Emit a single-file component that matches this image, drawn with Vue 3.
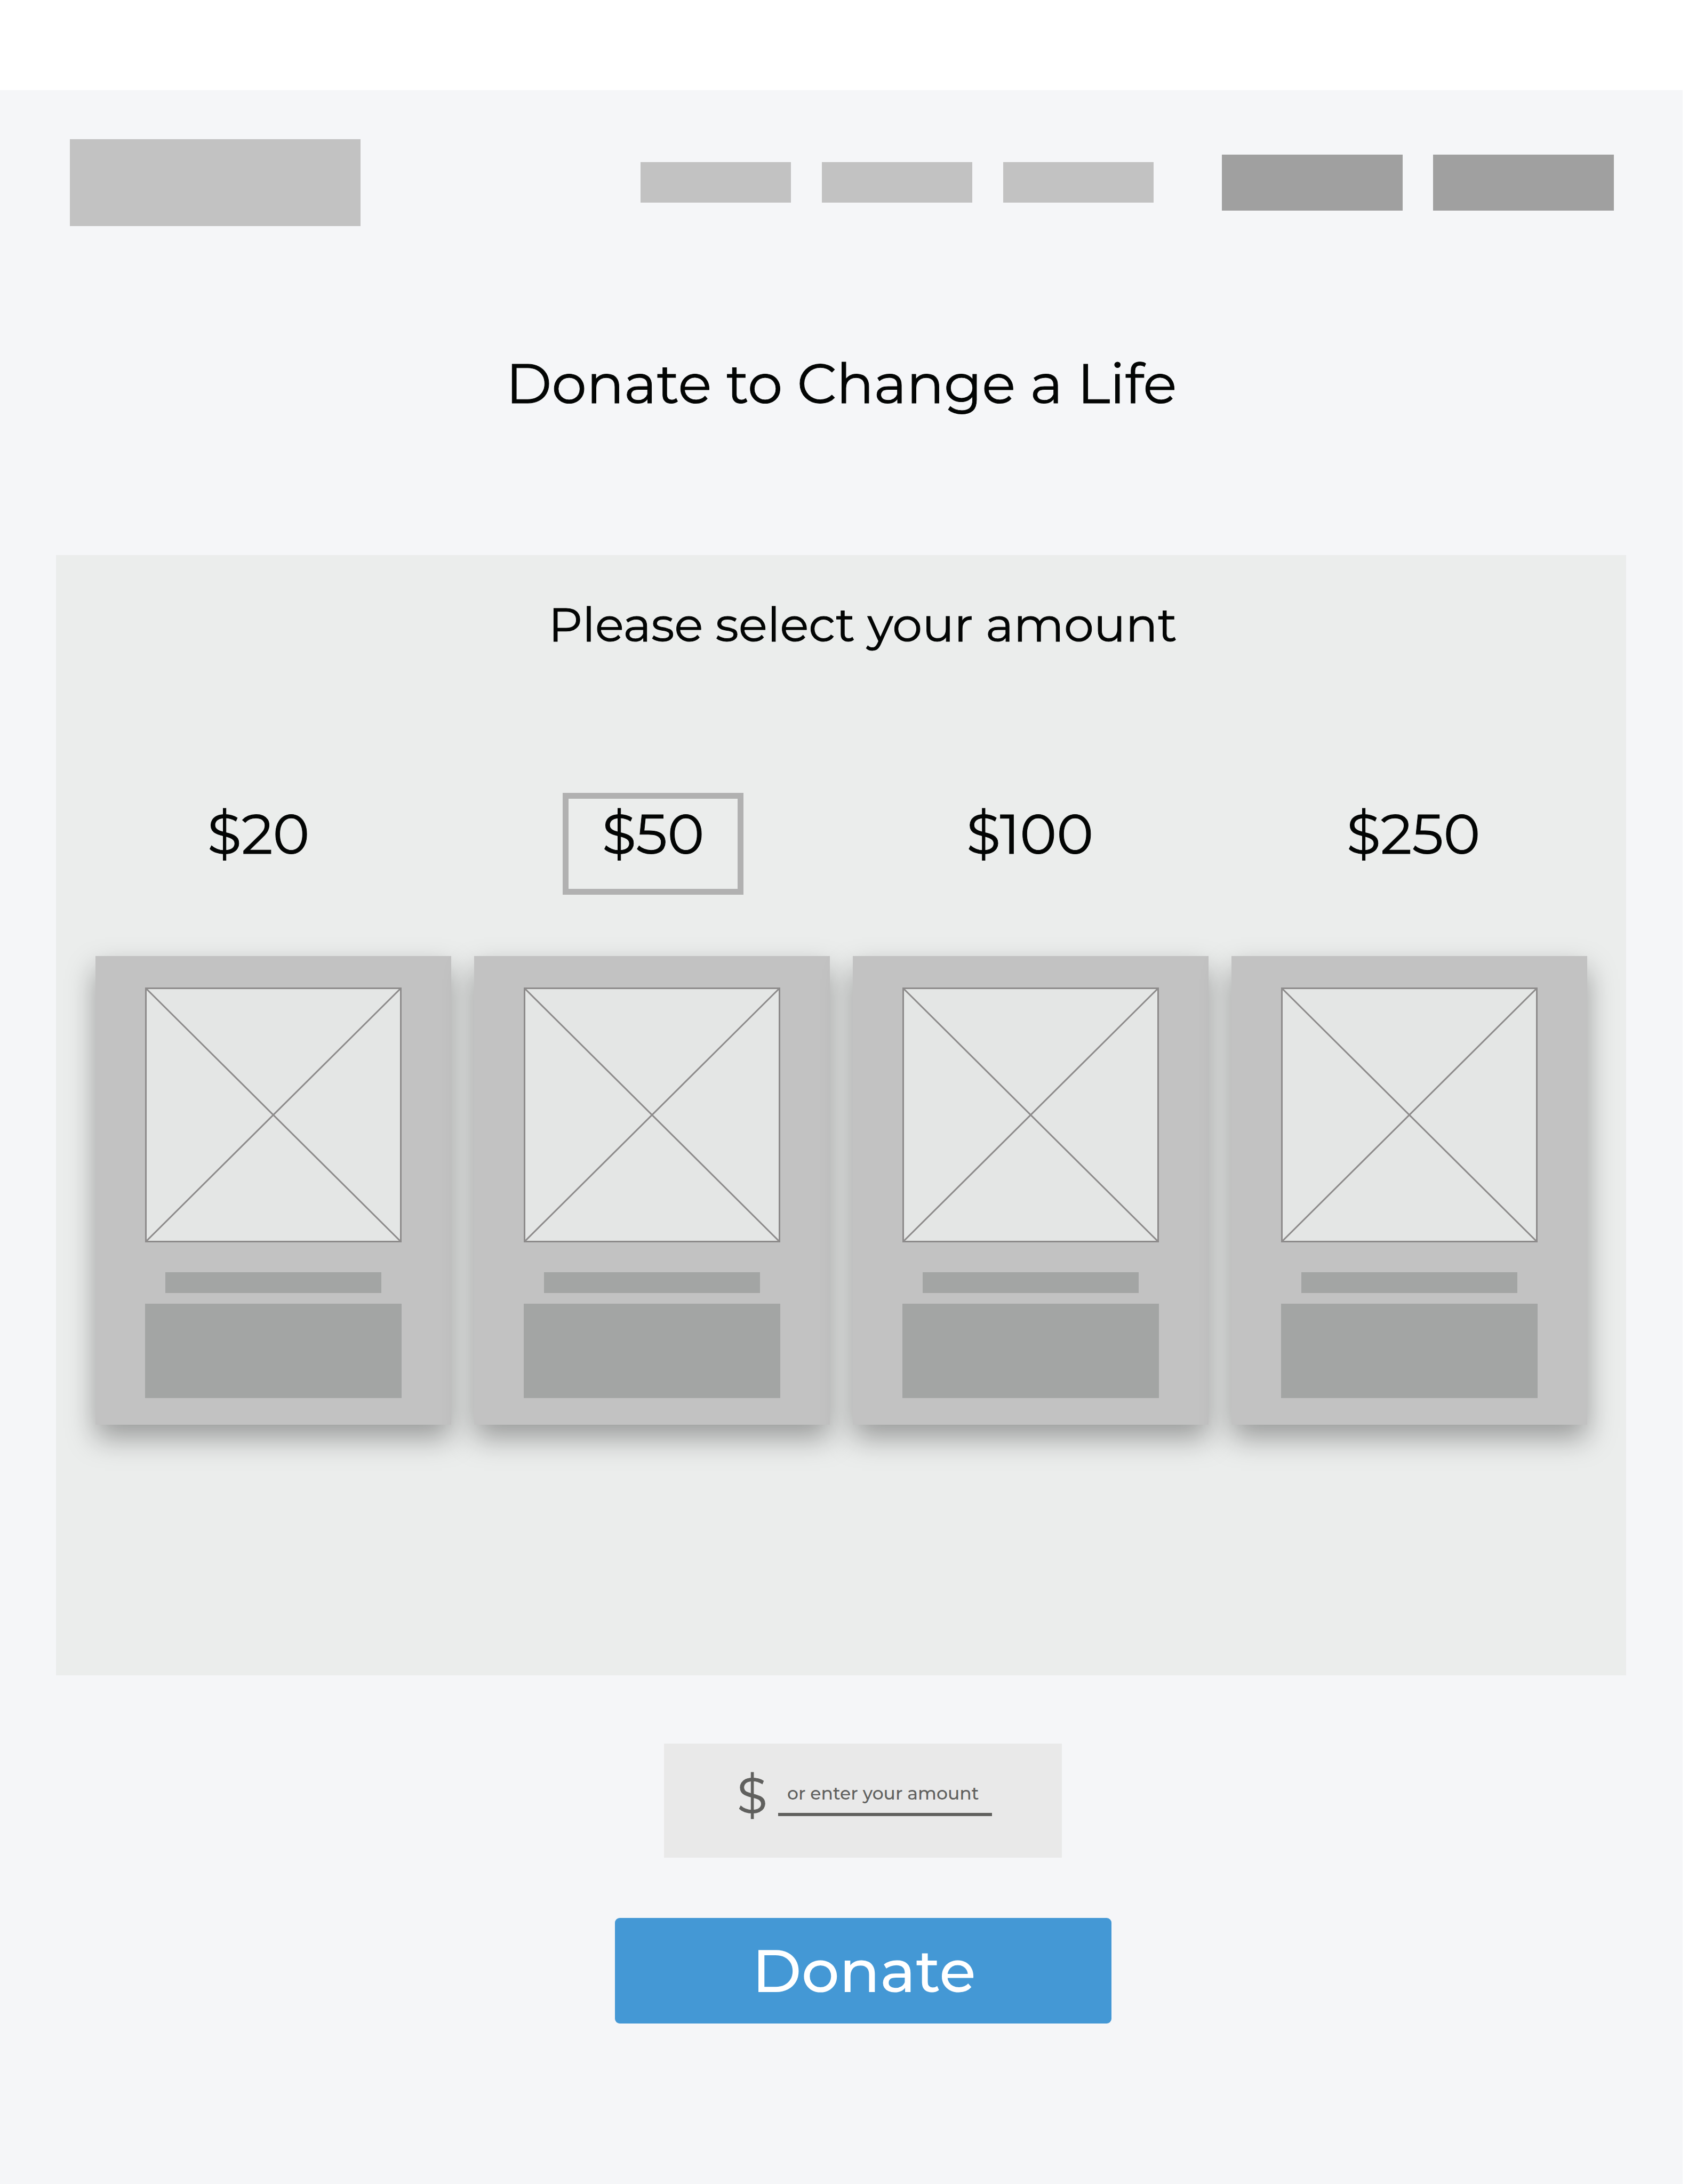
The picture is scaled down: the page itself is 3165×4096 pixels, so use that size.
<script setup>
import { ref } from 'vue'

const amounts = [20, 50, 100, 250]
const selected = ref(50)
const custom = ref('')
</script>

<template>
  <div class="frame">
    <div class="page">
      <header class="header">
        <a class="logo" href="#" aria-label="Home"></a>
        <nav class="nav" aria-label="Main">
          <a v-for="n in 3" :key="n" class="nav-link" href="#" :aria-label="`Section ${n}`"></a>
        </nav>
        <div class="actions">
          <button v-for="n in 2" :key="n" class="action" type="button" :aria-label="`Action ${n}`"></button>
        </div>
      </header>

      <h1 class="title">Donate to Change a Life</h1>

      <form @submit.prevent>
        <section class="panel">
          <h2 class="subtitle">Please select your amount</h2>

          <div class="amounts" role="radiogroup" aria-label="Amount">
            <label
              v-for="amount in amounts"
              :key="amount"
              class="amount"
              :class="{ selected: amount === selected }"
            >
              <input v-model="selected" class="radio" type="radio" name="amount" :value="amount" />
              ${{ amount }}
            </label>
          </div>

          <div class="cards">
            <article v-for="amount in amounts" :key="amount" class="card">
              <svg class="picture" viewBox="0 0 481 478" aria-hidden="true">
                <rect x="1.5" y="1.5" width="478" height="475" />
                <path d="M1.5 1.5L479.5 476.5M479.5 1.5L1.5 476.5" />
              </svg>
              <div class="caption"></div>
              <div class="description"></div>
            </article>
          </div>
        </section>

        <div class="checkout">
          <div class="custom">
            <label class="currency" for="custom-amount">$</label>
            <input
              id="custom-amount"
              v-model="custom"
              class="custom-input"
              type="text"
              inputmode="decimal"
              placeholder="or enter your amount"
            />
          </div>
          <button class="donate" type="submit">Donate</button>
        </div>
      </form>
    </div>
  </div>
</template>

<style>
body {
  margin: 0;
  background: #fff;
}
</style>

<style scoped>
.frame {
  box-sizing: border-box;
  min-height: 100vh;
  padding: 169px 10px 0 0;
  display: flex;
  font-family: Montserrat, Inter, "Open Sans", sans-serif;
  color: #030504;
}

.frame *,
.frame *::before {
  box-sizing: border-box;
}

.page {
  flex: 1;
  background: #f5f6f8;
}

.header {
  display: flex;
  align-items: center;
  height: 346px;
  padding: 0 129px 0 131px;
}

.logo {
  width: 545px;
  height: 163px;
  background: #c2c2c2;
}

.nav {
  display: flex;
  gap: 58px;
  margin-left: auto;
}

.nav-link {
  width: 282px;
  height: 76px;
  background: #c2c2c2;
}

.actions {
  display: flex;
  gap: 57px;
  margin-left: 128px;
}

.action {
  width: 339px;
  height: 105px;
  padding: 0;
  border: 0;
  background: #a0a0a0;
}

.title,
.subtitle,
.amount,
.currency {
  -webkit-text-stroke: 1px currentColor;
}

.title,
.subtitle {
  margin: 0;
  font-weight: 400;
  line-height: 120px;
  text-align: center;
}

.title {
  padding: 144px 0 262px;
  font-size: 104px;
}

.panel {
  margin: 0 106px 0 105px;
  padding: 70px 0 470px;
  background: #ebedec;
}

.subtitle {
  padding-left: 81px;
  font-size: 89px;
}

.amounts {
  display: grid;
  grid-template-columns: 759fr 721fr 692fr 746fr;
  justify-items: center;
  margin-top: 256px;
  padding-right: 26px;
}

.amount {
  position: relative;
  width: 339px;
  height: 191px;
  padding-top: 6px;
  border: 11px solid transparent;
  font-size: 104px;
  line-height: 120px;
  text-align: center;
  cursor: pointer;
}

.amount.selected {
  border-color: #b1b1b1;
}

.radio {
  position: absolute;
  inset: 0;
  margin: 0;
  opacity: 0;
}

.cards {
  display: grid;
  grid-template-columns: repeat(4, 1fr);
  gap: 43px;
  margin-top: 115px;
  padding: 0 73px 0 74px;
}

.card {
  display: flex;
  flex-direction: column;
  align-items: center;
  padding: 59px 0 50px;
  background: #c2c2c2;
  box-shadow: 0 25px 50px rgba(0, 0, 0, 0.35);
}

.picture {
  width: 481px;
  height: 478px;
  fill: #e4e6e5;
  stroke: #8d8b8b;
  stroke-width: 3;
}

.caption {
  width: 405px;
  height: 39px;
  margin-top: 56px;
  background: #a3a5a4;
}

.description {
  width: 481px;
  height: 177px;
  margin-top: 20px;
  background: #a3a5a4;
}

.checkout {
  display: flex;
  flex-direction: column;
  align-items: center;
  gap: 113px;
  padding: 128px 0 300px 81px;
}

.custom {
  display: flex;
  align-items: flex-end;
  width: 746px;
  height: 214px;
  padding: 0 0 78px 137px;
  background: #e9e9e9;
  color: #60605e;
}

.currency {
  width: 77px;
  font-size: 92px;
  line-height: 78px;
}

.custom-input {
  width: 401px;
  height: 80px;
  padding: 0 0 0 17px;
  border: 0;
  border-bottom: 6px solid #60605e;
  border-radius: 0;
  outline: 0;
  background: transparent;
  color: inherit;
  font: inherit;
  font-size: 33px;
  font-weight: 500;
}

.custom-input::placeholder {
  color: inherit;
  opacity: 1;
}

.donate {
  width: 931px;
  height: 198px;
  padding: 0 0 0 4px;
  border: 0;
  border-radius: 9px;
  background: #4498d5;
  color: #fff;
  font: inherit;
  font-size: 112px;
  font-weight: 500;
  cursor: pointer;
}
</style>
